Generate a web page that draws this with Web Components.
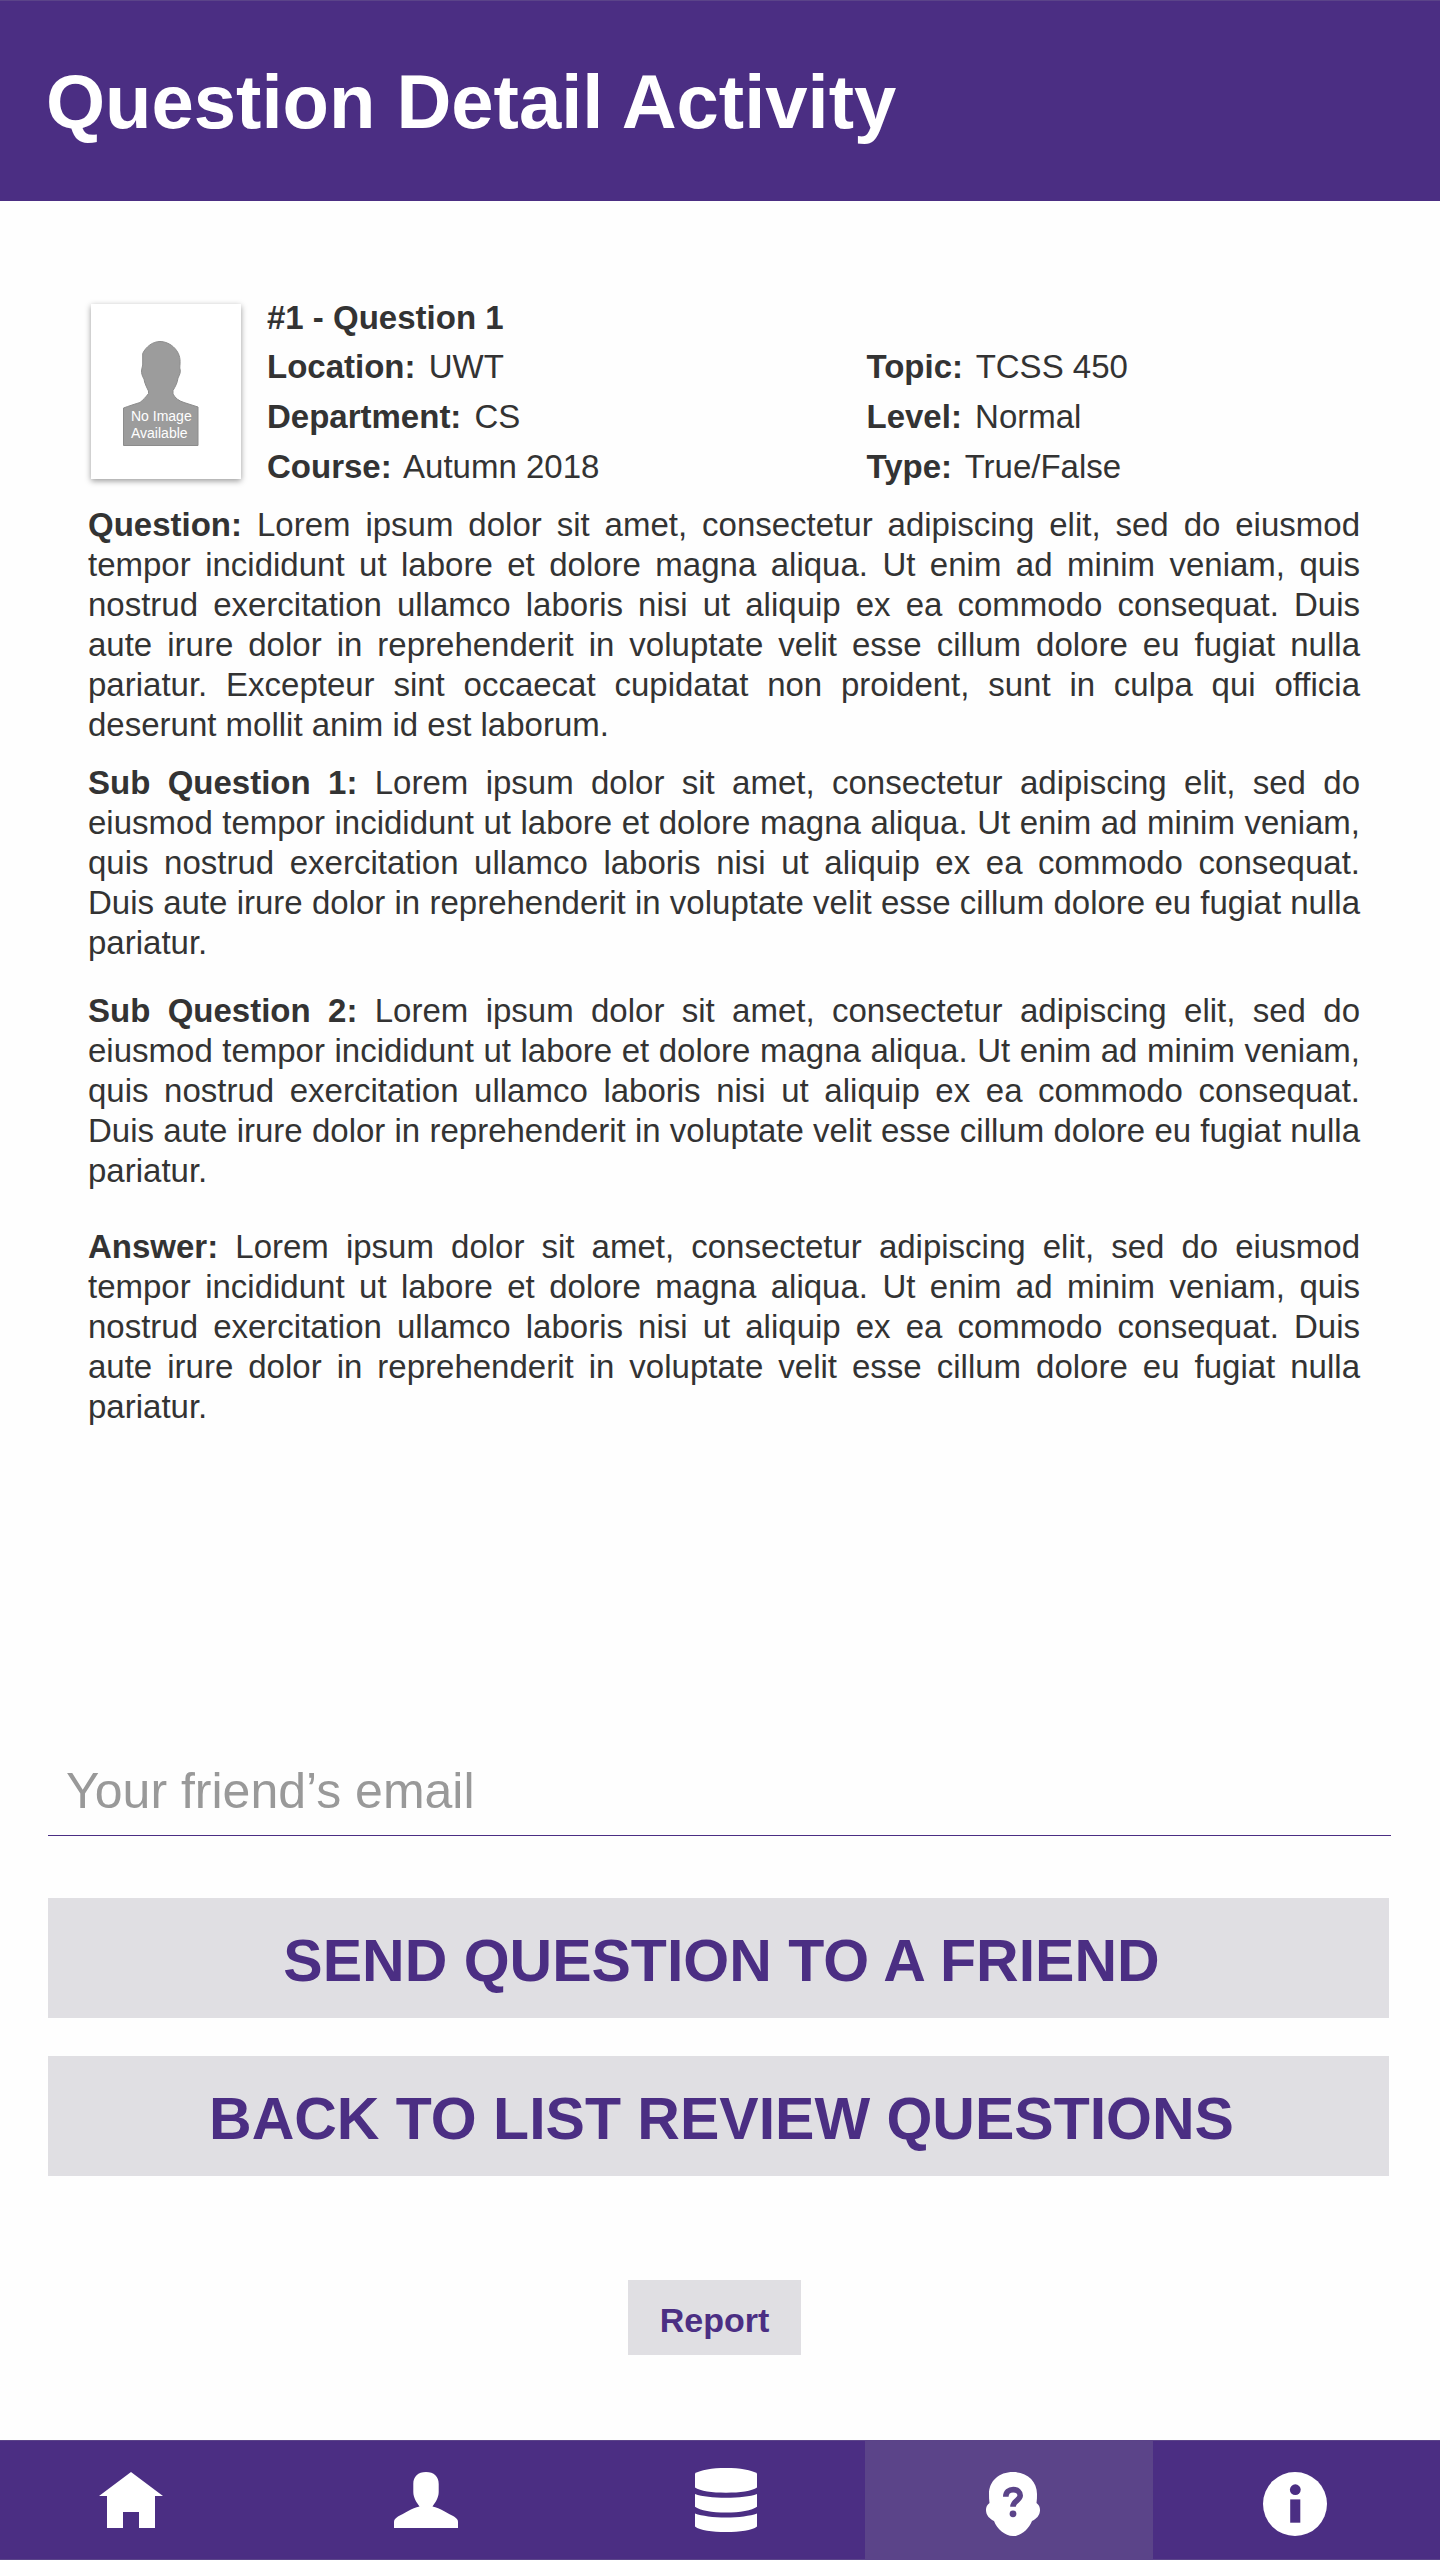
<!DOCTYPE html>
<html lang="en">
<head>
<meta charset="utf-8">
<meta name="viewport" content="width=device-width, initial-scale=1">
<title>Question Detail Activity</title>
<style>
  :root {
    --purple: #4b2e83;
    --purple-light: #5b4489;
    --grey: #e0dfe3;
    --ink: #333;
  }
  body {
    margin: 0;
    background: #fefefe;
    color: var(--ink);
    font-family: "Liberation Sans", Arial, sans-serif;
    font-size: 33px;
    line-height: 40px;
  }
</style>
</head>
<body>
<question-page>
  <app-bar slot="top">Question Detail Activity</app-bar>

  <question-summary>
    <no-image slot="picture"></no-image>
    <span slot="title">#1 - Question 1</span>
    <meta-field label="Location:">UWT</meta-field>
    <meta-field label="Topic:">TCSS 450</meta-field>
    <meta-field label="Department:">CS</meta-field>
    <meta-field label="Level:">Normal</meta-field>
    <meta-field label="Course:">Autumn 2018</meta-field>
    <meta-field label="Type:">True/False</meta-field>
  </question-summary>

  <text-section label="Question:">Lorem ipsum dolor sit amet, consectetur adipiscing elit, sed do eiusmod tempor incididunt ut labore et dolore magna aliqua. Ut enim ad minim veniam, quis nostrud exercitation ullamco laboris nisi ut aliquip ex ea commodo consequat. Duis aute irure dolor in reprehenderit in voluptate velit esse cillum dolore eu fugiat nulla pariatur. Excepteur sint occaecat cupidatat non proident, sunt in culpa qui officia deserunt mollit anim id est laborum.</text-section>
  <text-section label="Sub Question 1:" gap="small">Lorem ipsum dolor sit amet, consectetur adipiscing elit, sed do eiusmod tempor incididunt ut labore et dolore magna aliqua. Ut enim ad minim veniam, quis nostrud exercitation ullamco laboris nisi ut aliquip ex ea commodo consequat. Duis aute irure dolor in reprehenderit in voluptate velit esse cillum dolore eu fugiat nulla pariatur.</text-section>
  <text-section label="Sub Question 2:" gap="medium">Lorem ipsum dolor sit amet, consectetur adipiscing elit, sed do eiusmod tempor incididunt ut labore et dolore magna aliqua. Ut enim ad minim veniam, quis nostrud exercitation ullamco laboris nisi ut aliquip ex ea commodo consequat. Duis aute irure dolor in reprehenderit in voluptate velit esse cillum dolore eu fugiat nulla pariatur.</text-section>
  <text-section label="Answer:" gap="large">Lorem ipsum dolor sit amet, consectetur adipiscing elit, sed do eiusmod tempor incididunt ut labore et dolore magna aliqua. Ut enim ad minim veniam, quis nostrud exercitation ullamco laboris nisi ut aliquip ex ea commodo consequat. Duis aute irure dolor in reprehenderit in voluptate velit esse cillum dolore eu fugiat nulla pariatur.</text-section>

  <friend-form slot="actions">
    <action-button>SEND QUESTION TO A FRIEND</action-button>
    <action-button>BACK TO LIST REVIEW QUESTIONS</action-button>
    <action-button slot="report" size="small">Report</action-button>
  </friend-form>

  <nav-bar slot="bottom">
    <nav-item label="Home">
      <svg width="64" height="64" viewBox="0 0 64 64" fill="#fff"><path d="M32 0L64 24H56V56H40V40H24V56H8V24H0Z"/></svg>
    </nav-item>
    <nav-item label="Profile">
      <svg width="64" height="64" viewBox="0 0 64 64" fill="#fff"><path d="M32 0C40 0 44.700 4.500 44.700 12V20C44.700 26 41 31 38.500 34.500C46 36 54 41.500 60 44.500C63 46.500 64 48 64 50V56H0V50C0 48 1 46.500 4 44.500C10 41.500 18 36 25.500 34.500C23 31 19.300 26 19.300 20V12C19.300 4.500 24 0 32 0Z"/></svg>
    </nav-item>
    <nav-item label="Questions">
      <svg width="64" height="64" viewBox="2 0 64 64" fill="#fff" overflow="visible"><path d="M1 1.500C6 -2 18 -4 32 -4S58 -2 63 1.500V15.500C58 19 46 20.700 32 20.700S6 19 1 15.500Z"/><path d="M1 22C8 24.500 19 25.700 32 25.700S56 24.500 63 22V34.700C58 38.500 46 40.500 32 40.500S6 38.500 1 34.700Z"/><path d="M1 41.500C8 44 19 45.500 32 45.500S56 44 63 41.500V54.500C58 58.500 46 60 32 60S6 58.500 1 54.500Z"/></svg>
    </nav-item>
    <nav-item label="Review" active>
      <svg width="64" height="64" viewBox="0 0 64 64"><path fill="#fff" d="M32 0C46 0 56 9 56 22C56 25 56 28 55.500 31C60 34 60 41 56.500 45C55 46.500 53 48 51 49C48 57 40 64 32 64S16 57 13 49C11 48 9 46.500 7.500 45C4 41 4 34 8.500 31C8 28 8 25 8 22C8 9 18 0 32 0Z"/><path d="M24.800 24.700C24.800 20 28 17.600 32.200 17.600C36.500 17.600 39.200 20 39.200 23.600C39.200 28.500 32 28.500 32 34.800" fill="none" stroke="#5b4489" stroke-width="5.600"/><circle cx="32" cy="41.800" r="3.400" fill="#5b4489"/></svg>
    </nav-item>
    <nav-item label="About">
      <svg width="64" height="64" viewBox="2 0 64 64" overflow="visible"><circle cx="32" cy="32" r="32" fill="#fff"/><circle cx="32.300" cy="17.700" r="5.400" fill="#4b2e83"/><path d="M27.200 27.400H37.300V50.700H27.200Z" fill="#4b2e83"/></svg>
    </nav-item>
  </nav-bar>
</question-page>

<script>
  const define = (name, html, setup) => {
    const template = document.createElement('template');
    template.innerHTML = html;
    customElements.define(name, class extends HTMLElement {
      constructor() {
        super();
        this.attachShadow({ mode: 'open' }).append(template.content.cloneNode(true));
      }
      connectedCallback() {
        if (setup) setup(this, this.shadowRoot);
      }
    });
  };

  const setLabel = (host, root) => {
    root.querySelector('b').textContent = host.getAttribute('label');
  };

  define('question-page', `
    <style>
      :host { display: flex; flex-direction: column; min-height: 100vh; }
      main { flex: 1; display: flex; flex-direction: column; }
      article { padding: 93px 83px 60px 91px; }
      .actions { margin-top: auto; padding: 0 49px 85px 48px; }
    </style>
    <slot name="top"></slot>
    <main>
      <article><slot></slot></article>
      <div class="actions"><slot name="actions"></slot></div>
    </main>
    <slot name="bottom"></slot>`);

  define('app-bar', `
    <style>
      :host { display: block; background: var(--purple); border-top: 1px solid var(--purple-light); color: #fff; }
      h1 { margin: 0; padding: 57px 46px 55px; font-size: 76px; line-height: 88px; font-weight: bold; }
    </style>
    <header><h1><slot></slot></h1></header>`);

  define('question-summary', `
    <style>
      :host { display: flex; gap: 26px; margin-bottom: 13px; }
      .picture { padding-top: 10px; }
      .facts { flex: 1; }
      h2 { margin: 0; font-size: 33px; line-height: 48px; }
      .grid { display: grid; grid-template-columns: 11fr 9fr; }
    </style>
    <div class="picture"><slot name="picture"></slot></div>
    <div class="facts">
      <h2><slot name="title"></slot></h2>
      <div class="grid"><slot></slot></div>
    </div>`);

  define('meta-field', `
    <style>
      :host { display: block; line-height: 50px; }
      b { margin-right: 4px; }
    </style>
    <b></b> <slot></slot>`, setLabel);

  define('no-image', `
    <style>
      :host { display: block; background: #fff; box-shadow: 0 2px 6px rgba(0, 0, 0, .4); }
      svg { display: block; }
      text { font-size: 14px; fill: #fff; }
    </style>
    <svg width="150" height="175" viewBox="0 0 150 175">
      <path fill="#9c9c9c" stroke="#8c8c8c" stroke-width="1" d="M69 37.500C74 37.500 80 40 84 44.500C88 49 89.500 54 89 60C89 62 88.500 64 89 65C90 68 88.500 71 87 74C86.500 79 84 83 82 86.500V90C84 94 88 97 93 98.500L107 103V141.500H32.500V104C38 102 44 100 49 98.500C52 96 55 93 57.500 89.500V87C55.500 83 53.500 79 53 75C51 72 50.500 69 50.500 67C50.500 65 51.500 63 51.700 61V49.500C55 42.500 62 37.500 69 37.500Z"/>
      <text x="40" y="117">No Image</text>
      <text x="40" y="134">Available</text>
    </svg>`);

  define('text-section', `
    <style>
      :host { display: block; margin: 0 -3px; }
      :host([gap="small"]) { margin-top: 18px; }
      :host([gap="medium"]) { margin-top: 28px; }
      :host([gap="large"]) { margin-top: 36px; }
      p { margin: 0; text-align: justify; }
    </style>
    <p><b></b> <slot></slot></p>`, setLabel);

  define('friend-form', `
    <style>
      :host, form { display: flex; flex-direction: column; }
      form { gap: 38px; }
      input {
        box-sizing: border-box; width: 100%; margin: 0 0 24px; padding: 0 18px 15px;
        border: 0; border-bottom: 1px solid var(--purple); border-radius: 0; background: none;
        color: var(--ink); font: 50px/58px "Liberation Sans", Arial, sans-serif;
      }
      input::placeholder { color: #999; opacity: 1; }
      .report { display: flex; justify-content: center; padding: 104px 8px 0 0; }
    </style>
    <form onsubmit="return false">
      <input type="email" aria-label="Your friend’s email" placeholder="Your friend’s email">
      <slot></slot>
    </form>
    <div class="report"><slot name="report"></slot></div>`);

  define('action-button', `
    <style>
      :host { display: block; margin-right: 2px; }
      button {
        display: block; width: 100%; margin: 0; padding: 29px 24px 23px 30px; border: 0; border-radius: 0;
        background: var(--grey); color: var(--purple);
        font: bold 59px/68px "Liberation Sans", Arial, sans-serif; cursor: pointer;
      }
      :host([size="small"]) button { padding: 20px 32px 15px; font-size: 34px; line-height: 40px; }
    </style>
    <button type="button"><slot></slot></button>`);

  define('nav-bar', `
    <style>
      :host { display: block; background: var(--purple); }
      nav { display: grid; grid-template-columns: 262fr 328fr 275fr 288fr 287fr; }
    </style>
    <nav><slot></slot></nav>`);

  define('nav-item', `
    <style>
      :host { display: block; }
      a { display: flex; justify-content: center; padding: 31px 0 23px; border: solid var(--purple-light); border-width: 1px 0; }
      :host([active]) a { background: var(--purple-light); padding-left: 8px; }
      ::slotted(svg) { display: block; }
      ::slotted(svg[overflow="visible"]) { overflow: visible; }
    </style>
    <a href="#"><slot></slot></a>`, (host, root) => {
      root.querySelector('a').setAttribute('aria-label', host.getAttribute('label'));
    });
</script>
</body>
</html>
